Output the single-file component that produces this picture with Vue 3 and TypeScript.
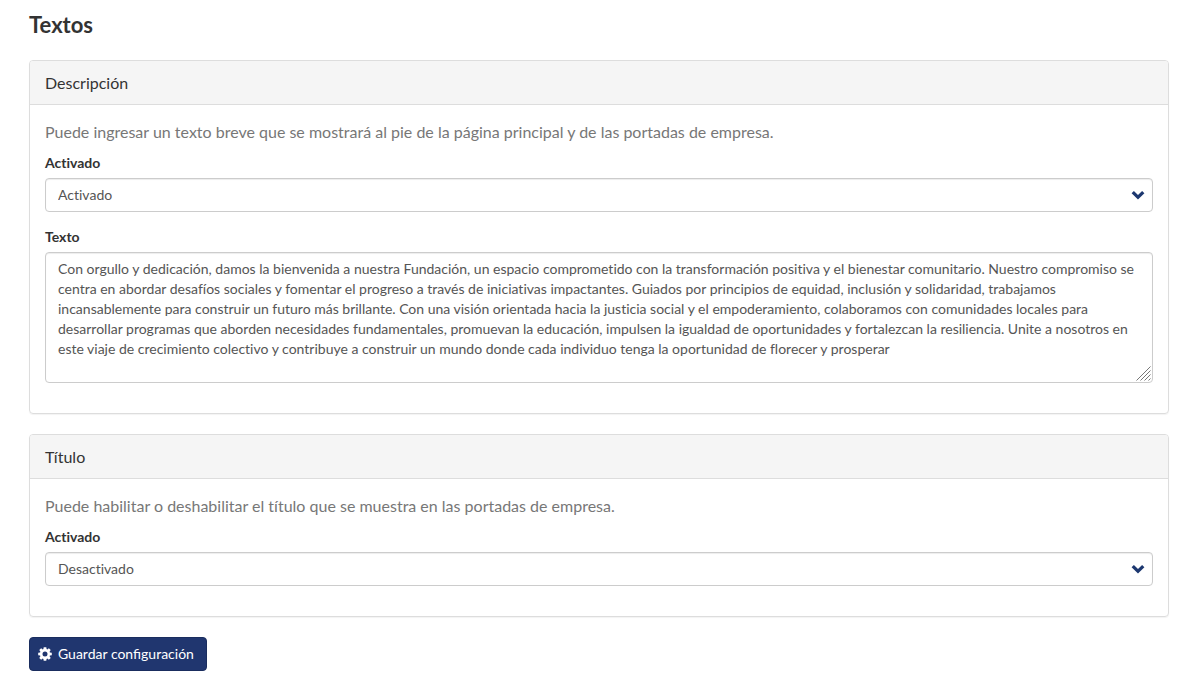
<script setup lang="ts">
import { ref } from 'vue'

const descriptionState = ref('on')
const titleState = ref('off')
const text = ref(
  'Con orgullo y dedicación, damos la bienvenida a nuestra Fundación, un espacio comprometido con la transformación positiva y el bienestar comunitario. Nuestro compromiso se centra en abordar desafíos sociales y fomentar el progreso a través de iniciativas impactantes. Guiados por principios de equidad, inclusión y solidaridad, trabajamos incansablemente para construir un futuro más brillante. Con una visión orientada hacia la justicia social y el empoderamiento, colaboramos con comunidades locales para desarrollar programas que aborden necesidades fundamentales, promuevan la educación, impulsen la igualdad de oportunidades y fortalezcan la resiliencia. Unite a nosotros en este viaje de crecimiento colectivo y contribuye a construir un mundo donde cada individuo tenga la oportunidad de florecer y prosperar'
)
</script>

<template>
  <form class="page" @submit.prevent>
    <h1 class="title">Textos</h1>

    <section class="panel">
      <h2 class="panel-heading">Descripción</h2>
      <div class="panel-body">
        <p class="help">Puede ingresar un texto breve que se mostrará al pie de la página principal y de las portadas de empresa.</p>
        <div class="group">
          <label for="description-state">Activado</label>
          <div class="field">
            <select id="description-state" v-model="descriptionState" class="control">
              <option value="on">Activado</option>
              <option value="off">Desactivado</option>
            </select>
            <svg class="chevron" viewBox="0 0 14 10" aria-hidden="true"><path d="M0.6 3.2 2.9 0.9 7 4.9 11.1 0.9 13.4 3.2 7 9.4Z" /></svg>
          </div>
        </div>
        <div class="group">
          <label for="description-text">Texto</label>
          <div class="field">
            <textarea id="description-text" v-model="text" class="control area" spellcheck="false"></textarea>
            <svg class="grip" viewBox="0 0 15 15" aria-hidden="true"><path d="M0.5 14.5 14.5 0.5M4.5 14.5 14.5 4.5M8.5 14.5 14.5 8.5M12.5 14.5 14.5 12.5" /></svg>
          </div>
        </div>
      </div>
    </section>

    <section class="panel">
      <h2 class="panel-heading">Título</h2>
      <div class="panel-body">
        <p class="help">Puede habilitar o deshabilitar el título que se muestra en las portadas de empresa.</p>
        <div class="group">
          <label for="title-state">Activado</label>
          <div class="field">
            <select id="title-state" v-model="titleState" class="control">
              <option value="on">Activado</option>
              <option value="off">Desactivado</option>
            </select>
            <svg class="chevron" viewBox="0 0 14 10" aria-hidden="true"><path d="M0.6 3.2 2.9 0.9 7 4.9 11.1 0.9 13.4 3.2 7 9.4Z" /></svg>
          </div>
        </div>
      </div>
    </section>

    <button type="submit" class="save">
      <svg class="gear" viewBox="0 0 14 14" aria-hidden="true">
        <path fill-rule="evenodd" d="M5.7 0.2H8.3L8.6 2.1 9.3 2.4 10.9 1.3 12.7 3.1 11.6 4.7 11.9 5.4 13.8 5.7V8.3L11.9 8.6 11.6 9.3 12.7 10.9 10.9 12.7 9.3 11.6 8.6 11.9 8.3 13.8H5.7L5.4 11.9 4.7 11.6 3.1 12.7 1.3 10.9 2.4 9.3 2.1 8.6 0.2 8.3V5.7L2.1 5.4 2.4 4.7 1.3 3.1 3.1 1.3 4.7 2.4 5.4 2.1ZM7 4.5A2.5 2.5 0 1 0 7 9.5 2.5 2.5 0 1 0 7 4.5Z" />
      </svg>
      <span>Guardar configuración</span>
    </button>
  </form>
</template>

<style>
body {
  margin: 0;
  background: #fff;
}
</style>

<style scoped>
* {
  box-sizing: border-box;
}
.page {
  padding: 13px 23px 24px 29px;
  font-family: Lato, 'Liberation Sans', sans-serif;
  font-size: 14px;
  line-height: 20px;
  font-variant-ligatures: none;
  color: #333;
}
.title {
  margin: 0 0 23px;
  font-size: 22px;
  line-height: 24px;
  font-weight: 700;
}
.panel {
  margin-bottom: 20px;
  border: 1px solid #ddd;
  border-radius: 4px;
  box-shadow: 0 1px 1px rgba(0, 0, 0, 0.05);
}
.panel-heading {
  margin: 0;
  padding: 12px 15px 11px;
  border-bottom: 1px solid #ddd;
  border-radius: 3px 3px 0 0;
  background: #f5f5f5;
  font-size: 16px;
  line-height: 20px;
  font-weight: 400;
}
.panel-body {
  padding: 15px;
}
.help {
  margin: 0 0 9px;
  font-size: 16px;
  line-height: 24px;
  color: #777;
}
.group {
  margin-bottom: 15px;
}
label {
  display: block;
  margin-bottom: 5px;
  font-weight: 700;
}
.field {
  position: relative;
}
.control {
  display: block;
  width: 100%;
  height: 34px;
  margin: 0;
  padding: 6px 12px;
  border: 1px solid #ccc;
  border-radius: 4px;
  background: #fff;
  box-shadow: inset 0 1px 1px rgba(0, 0, 0, 0.075);
  color: #555;
  font: inherit;
  font-variant-ligatures: none;
  appearance: none;
}
.area {
  height: 131px;
  resize: vertical;
}
.area::-webkit-resizer {
  background: transparent;
}
.grip {
  position: absolute;
  right: 2px;
  bottom: 2px;
  width: 15px;
  height: 15px;
  fill: none;
  stroke: #777;
  pointer-events: none;
}
.chevron {
  position: absolute;
  top: 12px;
  right: 8px;
  width: 14px;
  height: 10px;
  fill: #1d3870;
  pointer-events: none;
}
.save {
  display: inline-flex;
  align-items: center;
  gap: 6px;
  height: 34px;
  padding: 0 12px 0 8px;
  border: 1px solid #1a2d5e;
  border-radius: 4px;
  background: #20366f;
  color: #fff;
  font: inherit;
  font-variant-ligatures: common-ligatures;
  cursor: pointer;
}
.gear {
  width: 14px;
  height: 14px;
  fill: #fff;
}
</style>
